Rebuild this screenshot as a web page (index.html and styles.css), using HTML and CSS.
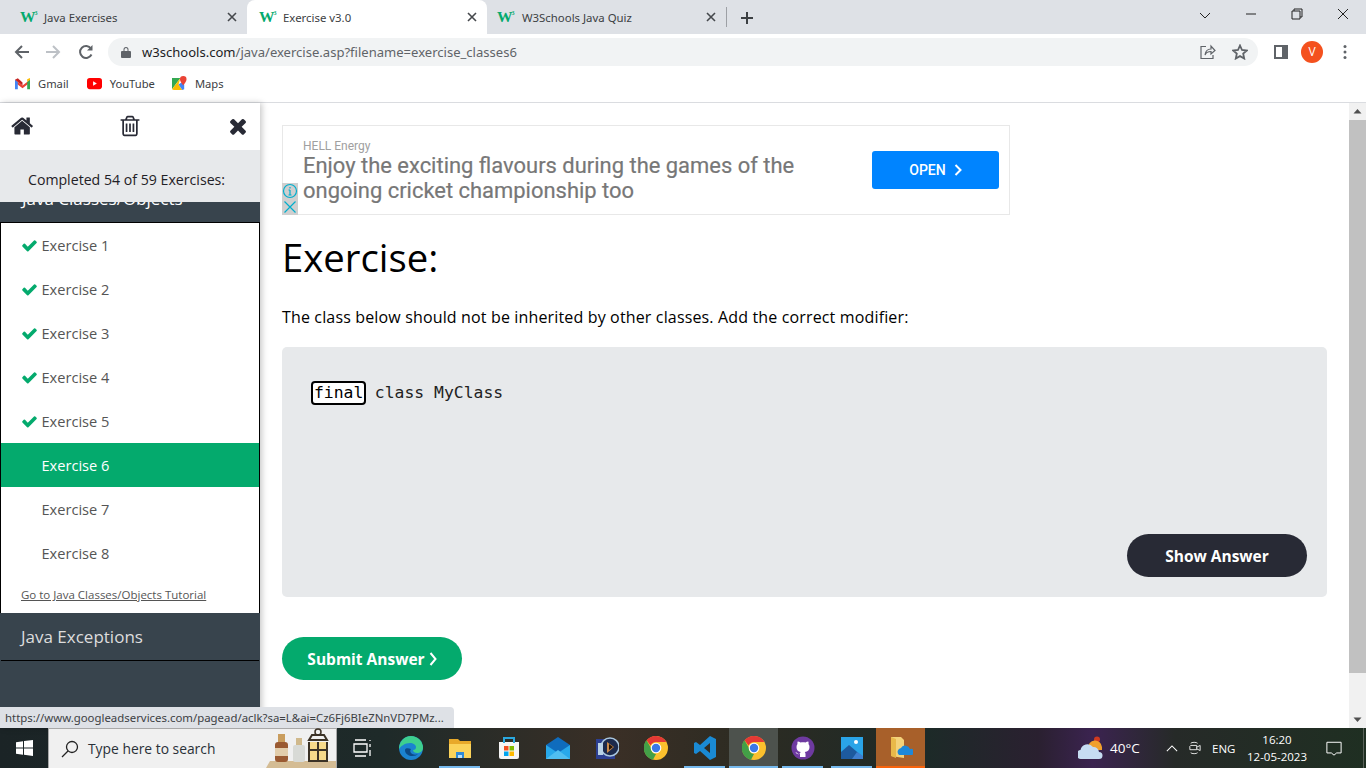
FILE: index.html
```html
<!DOCTYPE html>
<html lang="en">
<head>
<meta charset="utf-8">
<title>Exercise v3.0</title>
<link rel="stylesheet" href="styles.css">
</head>
<body>
<header class="tabstrip">
  <div class="tab tab-first"><span class="fav">W<sup>3</sup></span><span class="tab-title">Java Exercises</span><svg class="tab-x" viewBox="0 0 10 10"><path d="M1 1l8 8M9 1l-8 8"/></svg></div>
  <div class="tab tab-active"><span class="fav">W<sup>3</sup></span><span class="tab-title">Exercise v3.0</span><svg class="tab-x" viewBox="0 0 10 10"><path d="M1 1l8 8M9 1l-8 8"/></svg></div>
  <div class="tab tab-last"><span class="fav">W<sup>3</sup></span><span class="tab-title">W3Schools Java Quiz</span><svg class="tab-x" viewBox="0 0 10 10"><path d="M1 1l8 8M9 1l-8 8"/></svg></div>
  <div class="tab-sep"></div>
  <svg class="tab-plus" viewBox="0 0 12 12"><path d="M6 0v12M0 6h12"/></svg>
  <div class="win-controls">
    <svg class="win-ico" viewBox="0 0 46 34"><path d="M18 13l5 5 5-5" /></svg>
    <svg class="win-ico" viewBox="0 0 46 34"><path d="M18 14h10"/></svg>
    <svg class="win-ico" viewBox="0 0 46 34"><path d="M18 11h8v8h-8zM20 11V9h8v8h-2"/></svg>
    <svg class="win-ico" viewBox="0 0 46 34"><path d="M18 9l10 10M28 9L18 19"/></svg>
  </div>
</header>

<nav class="toolbar">
  <svg class="nav-ico" viewBox="0 0 16 16"><path class="st-dark" d="M15 8H2M8 2L2 8l6 6"/></svg>
  <svg class="nav-ico nav-fwd" viewBox="0 0 16 16"><path class="st-light" d="M1 8h13M8 2l6 6-6 6"/></svg>
  <svg class="nav-ico nav-reload" viewBox="0 0 16 16"><path class="st-dark" d="M13.5 10.5A6 6 0 1 1 13 4.5"/><path class="fill-dark" d="M14.5 1v5.5H9z"/></svg>
  <div class="omnibox">
    <svg class="lock" viewBox="0 0 10 12"><path d="M1 5h8a1 1 0 0 1 1 1v5a1 1 0 0 1-1 1H1a1 1 0 0 1-1-1V6a1 1 0 0 1 1-1zM2.500 5V3.500a2.500 2.500 0 0 1 5 0V5H6.500V3.500a1.500 1.500 0 0 0-3 0V5z"/></svg>
    <span class="url">w3schools.com<span class="url-dim">/java/exercise.asp?filename=exercise_classes6</span></span>
    <svg class="share" viewBox="0 0 16 16"><path d="M6 2.500H1v12h12V11M5 11c.5-4 3-6 6-6V2l4 4.500L11 10V7.500c-3 0-5 1-6 3.500z"/></svg>
    <svg class="star" viewBox="0 0 16 16"><path d="M8 1.500l2 4.500 4.800.5-3.600 3.200 1 4.800L8 12.100l-4.200 2.400 1-4.800L1.200 6.500 6 6z"/></svg>
  </div>
  <svg class="panel" viewBox="0 0 14 14"><path d="M0 0h14v14H0zM2 2v10h6V2z" fill-rule="evenodd"/></svg>
  <div class="avatar">V</div>
  <svg class="dots" viewBox="0 0 4 16"><circle cx="2" cy="2.500" r="1.500"/><circle cx="2" cy="8" r="1.500"/><circle cx="2" cy="13.500" r="1.500"/></svg>
</nav>

<nav class="bookmarks">
  <div class="bm bm-gmail"><svg class="bm-ico" viewBox="0 0 16 12"><path fill="#ea4335" d="M0 2l8 6 8-6v3l-8 6-8-6z"/><path fill="#4285f4" d="M0 2v10h3V4.500z"/><path fill="#34a853" d="M16 2v10h-3V4.500z"/><path fill="#fbbc04" d="M13 1.500L16 0v2l-3 2.500z"/><path fill="#c5221f" d="M0 2l3-1.500 5 4.500v3z"/></svg><span>Gmail</span></div>
  <div class="bm bm-yt"><svg class="bm-ico" viewBox="0 0 16 12"><rect width="16" height="12" rx="3" fill="#f00"/><path d="M6.500 3.500v5l4-2.500z" fill="#fff"/></svg><span>YouTube</span></div>
  <div class="bm"><svg class="bm-ico" viewBox="0 0 16 16"><path fill="#34a853" d="M0 2h9L0 14z"/><path fill="#fbbc04" d="M9 2L0 14l2 1h9l-4-6z"/><path fill="#4285f4" d="M7 9l4 6 2-1V9l-3-2z"/><path fill="#ea4335" d="M12 0a3.500 3.500 0 0 1 3.500 3.500C15.500 6 12 10 12 10S8.500 6 8.500 3.500A3.500 3.500 0 0 1 12 0z"/></svg><span>Maps</span></div>
</nav>

<div class="viewport">
  <aside class="sidebar">
    <div class="side-top">
      <svg class="fa" viewBox="0 0 1792 1792"><path d="M1408 992v480q0 26-19 45t-45 19h-384v-384h-256v384h-384q-26 0-45-19t-19-45v-480q0-1 .5-3t.5-3l575-474 575 474q1 2 1 6zm223-69l-62 74q-8 9-21 11h-3q-13 0-21-7l-692-577-692 577q-12 8-24 7-13-2-21-11l-62-74q-8-10-7-23.5t11-21.5l719-599q32-26 76-26t76 26l244 204v-195q0-14 9-23t23-9h192q14 0 23 9t9 23v408l219 182q10 8 11 21.5t-7 23.5z"/></svg>
      <svg class="fa fa-trash" viewBox="0 0 1792 1792"><path d="M704 736v576q0 14-9 23t-23 9h-64q-14 0-23-9t-9-23v-576q0-14 9-23t23-9h64q14 0 23 9t9 23zm256 0v576q0 14-9 23t-23 9h-64q-14 0-23-9t-9-23v-576q0-14 9-23t23-9h64q14 0 23 9t9 23zm256 0v576q0 14-9 23t-23 9h-64q-14 0-23-9t-9-23v-576q0-14 9-23t23-9h64q14 0 23 9t9 23zm128 724v-948h-896v948q0 22 7 40.5t14.5 27 10.5 8.5h832q3 0 10.5-8.5t14.5-27 7-40.5zm-672-1076h448l-48-117q-7-9-17-11h-317q-10 2-17 11zm928 32v64q0 14-9 23t-23 9h-96v948q0 83-47 143.5t-113 60.5h-832q-66 0-113-58.5t-47-141.5v-952h-96q-14 0-23-9t-9-23v-64q0-14 9-23t23-9h309l70-167q15-37 54-63t79-26h320q40 0 79 26t54 63l70 167h309q14 0 23 9t9 23z"/></svg>
      <svg class="fa" viewBox="0 0 1792 1792"><path d="M1490 1322q0 40-28 68l-136 136q-28 28-68 28t-68-28l-294-294-294 294q-28 28-68 28t-68-28l-136-136q-28-28-28-68t28-68l294-294-294-294q-28-28-28-68t28-68l136-136q28-28 68-28t68 28l294 294 294-294q28-28 68-28t68 28l136 136q28 28 28 68t-28 68l-294 294 294 294q28 28 28 68z"/></svg>
    </div>
    <div class="side-progress">Completed 54 of 59 Exercises:</div>
    <div class="side-scroll">
      <div class="side-heading">Java Classes/Objects</div>
      <div class="side-list">
        <div class="ex"><svg class="check" viewBox="0 0 1792 1792"><path d="M1671 566q0 40-28 68l-724 724-136 136q-28 28-68 28t-68-28l-136-136-362-362q-28-28-28-68t28-68l136-136q28-28 68-28t68 28l294 295 656-657q28-28 68-28t68 28l136 136q28 28 28 68z"/></svg>Exercise 1</div>
        <div class="ex"><svg class="check" viewBox="0 0 1792 1792"><path d="M1671 566q0 40-28 68l-724 724-136 136q-28 28-68 28t-68-28l-136-136-362-362q-28-28-28-68t28-68l136-136q28-28 68-28t68 28l294 295 656-657q28-28 68-28t68 28l136 136q28 28 28 68z"/></svg>Exercise 2</div>
        <div class="ex"><svg class="check" viewBox="0 0 1792 1792"><path d="M1671 566q0 40-28 68l-724 724-136 136q-28 28-68 28t-68-28l-136-136-362-362q-28-28-28-68t28-68l136-136q28-28 68-28t68 28l294 295 656-657q28-28 68-28t68 28l136 136q28 28 28 68z"/></svg>Exercise 3</div>
        <div class="ex"><svg class="check" viewBox="0 0 1792 1792"><path d="M1671 566q0 40-28 68l-724 724-136 136q-28 28-68 28t-68-28l-136-136-362-362q-28-28-28-68t28-68l136-136q28-28 68-28t68 28l294 295 656-657q28-28 68-28t68 28l136 136q28 28 28 68z"/></svg>Exercise 4</div>
        <div class="ex"><svg class="check" viewBox="0 0 1792 1792"><path d="M1671 566q0 40-28 68l-724 724-136 136q-28 28-68 28t-68-28l-136-136-362-362q-28-28-28-68t28-68l136-136q28-28 68-28t68 28l294 295 656-657q28-28 68-28t68 28l136 136q28 28 28 68z"/></svg>Exercise 5</div>
        <div class="ex ex-current">Exercise 6</div>
        <div class="ex ex-open">Exercise 7</div>
        <div class="ex ex-open">Exercise 8</div>
        <div class="side-link">Go to Java Classes/Objects Tutorial</div>
      </div>
      <div class="side-next">Java Exceptions</div>
    </div>
  </aside>

  <main class="content">
    <div class="ad">
      <div class="ad-text">
        <div class="ad-brand">HELL Energy</div>
        <div class="ad-head">Enjoy the exciting flavours during the games of the ongoing cricket championship too</div>
      </div>
      <div class="ad-open">OPEN<svg class="ad-chev" viewBox="0 0 8 12"><path d="M1.500 1l5 5-5 5"/></svg></div>
      <div class="ad-badges">
        <svg class="ad-badge" viewBox="0 0 16 16"><circle cx="8" cy="8" r="6.500"/><path d="M8 7v5M6.500 12h3M6.500 7H8M8 4v1.500"/></svg>
        <svg class="ad-badge" viewBox="0 0 16 16"><path d="M2.500 2.500l11 11M13.500 2.500l-11 11"/></svg>
      </div>
    </div>
    <h1 class="title">Exercise:</h1>
    <p class="prompt">The class below should not be inherited by other classes. Add the correct modifier:</p>
    <section class="code-box">
      <div class="code-line"><span class="code-input">final</span> class MyClass</div>
      <div class="show-row"><span class="btn btn-dark">Show Answer</span></div>
    </section>
    <div class="btn btn-green">Submit Answer<svg class="btn-chev" viewBox="0 0 8 14"><path d="M1.500 1l5 6-5 6"/></svg></div>
  </main>

  <div class="scrollbar">
    <svg class="sb-arrow" viewBox="0 0 17 17"><path d="M4.500 10.500h8l-4-4.500z"/></svg>
    <div class="sb-thumb"></div>
    <div class="sb-rest"></div>
    <svg class="sb-arrow" viewBox="0 0 17 17"><path d="M4.500 6.500h8l-4 4.500z"/></svg>
  </div>

  <div class="status-bubble">https://www.googleadservices.com/pagead/aclk?sa=L&amp;ai=Cz6Fj6BIeZNnVD7PMz...</div>
</div>

<footer class="taskbar">
  <div class="start"><svg class="winlogo" viewBox="0 0 17 16"><path d="M0 2.300l7-1v6.300H0zM8 1.100l9-1.100v7.600H8zM0 8.500h7v6.300l-7-1zM8 8.500h9V16l-9-1.200z"/></svg></div>
  <div class="search">
    <svg class="search-ico" viewBox="0 0 18 18"><circle cx="11" cy="7" r="5.500"/><path d="M7 11l-6 6"/></svg>
    <span class="search-text">Type here to search</span>
    <svg class="search-art" viewBox="0 0 70 40"><path d="M0 40l4-7h66v7z" fill="#d4bc94"/><rect x="9" y="14" width="13" height="20" rx="3" fill="#9a5a32"/><rect x="12" y="6" width="7" height="8" fill="#c99d5e"/><rect x="9" y="20" width="13" height="8" fill="#e2cdab"/><rect x="27" y="17" width="12" height="17" rx="2" fill="#d8dad6"/><rect x="30" y="10" width="6" height="7" fill="#d0b98c"/><path d="M43 14h18v18H43z" fill="#f6d98a"/><path d="M43 12h18l-3-5H46zM43 14v19h18V14M52 14v19M43 22h18" fill="none" stroke="#3b3226" stroke-width="2"/><circle cx="52" cy="4" r="3" fill="none" stroke="#3b3226" stroke-width="1.500"/></svg>
  </div>
  <div class="tb-apps">
    <div class="tb-app"><svg class="tb-ico" viewBox="0 0 24 24"><path d="M5 4h11M5 20h11M4 8h13v8H4zM20 4v1M20 8v3M20 14v6" fill="none" stroke="#fff" stroke-width="1.300"/></svg></div>
    <div class="tb-app"><svg class="tb-ico" viewBox="0 0 24 24"><circle cx="12" cy="12" r="12" fill="#1b83d0"/><path d="M12 0a12 12 0 0 1 12 12c0 3-3 5-6 5-2 0-4-1-4-3 2 0 3-1 3-3 0-2-3-4-6-4C6 7 2 10 0 13 0 6 5 0 12 0z" fill="#3ecf8e"/><path d="M6 14c0 4 4 6 7 6 3 0 5-1 6-2-2 1-5 1-7-1-1-1-1-3 0-4-3-1-6-1-6 1z" fill="#0c4a86"/></svg></div>
    <div class="tb-app tb-on"><svg class="tb-ico" viewBox="0 0 24 24"><path d="M1 3h9l2 2h11v4H1z" fill="#e8a92a"/><path d="M1 8h22v14H1z" fill="#fbd35a"/><path d="M8 16h8v6H8z" fill="#2f8ad6"/><path d="M10 19h4v3h-4z" fill="#bde0f7"/></svg></div>
    <div class="tb-app"><svg class="tb-ico" viewBox="0 0 24 24"><path d="M2 6h20v15a2 2 0 0 1-2 2H4a2 2 0 0 1-2-2z" fill="#f5f5f5"/><path d="M7 7V2h10v5" fill="none" stroke="#2aa8e0" stroke-width="2"/><path d="M7 10h4.500v4.500H7z" fill="#f25022"/><path d="M12.500 10H17v4.500h-4.500z" fill="#7fba00"/><path d="M7 15.500h4.500V20H7z" fill="#00a4ef"/><path d="M12.500 15.500H17V20h-4.500z" fill="#ffb900"/></svg></div>
    <div class="tb-app"><svg class="tb-ico" viewBox="0 0 24 24"><path d="M0 9L12 1l12 8v14H0z" fill="#0f6cbd"/><path d="M0 9l12 8 12-8v14H0z" fill="#28a8ea"/><path d="M0 23l12-9 12 9z" fill="#50bef0"/></svg></div>
    <div class="tb-app"><svg class="tb-ico" viewBox="0 0 24 24"><path d="M1 3h19v20H1z" fill="#2c3f91"/><circle cx="15" cy="11" r="9" fill="#1c2a4c" stroke="#a9c6de" stroke-width="1.500"/><path d="M12 6l7 5-7 6z" fill="#c98a4b"/><path d="M14 8l4 3-4 3z" fill="#231407"/><path d="M3 7h5v12H3z" fill="#b9d2e6"/></svg></div>
    <div class="tb-app"><svg class="tb-ico" viewBox="0 0 24 24"><circle cx="12" cy="12" r="12" fill="#fbc02d"/><path d="M12 0a12 12 0 0 1 10.400 6H12a6 6 0 0 0-5.500 3.500L2.500 4.300A12 12 0 0 1 12 0z" fill="#e53935"/><path d="M2.500 4.300L7 12a6 6 0 0 0 5 6l-3 5.700A12 12 0 0 1 2.500 4.300z" fill="#43a047"/><circle cx="12" cy="12" r="5.300" fill="#fff"/><circle cx="12" cy="12" r="4.200" fill="#3b78e7"/></svg></div>
    <div class="tb-app tb-on"><svg class="tb-ico" viewBox="0 0 24 24"><path d="M17 0l6 3v18l-6 3-10-9-4 3-2-1V7l2-1 4 3zM17 7l-6 5 6 5z" fill="#1a8ad4" fill-rule="evenodd"/></svg></div>
    <div class="tb-app tb-on tb-active"><svg class="tb-ico" viewBox="0 0 24 24"><circle cx="12" cy="12" r="12" fill="#fbc02d"/><path d="M12 0a12 12 0 0 1 10.400 6H12a6 6 0 0 0-5.500 3.500L2.500 4.300A12 12 0 0 1 12 0z" fill="#e53935"/><path d="M2.500 4.300L7 12a6 6 0 0 0 5 6l-3 5.700A12 12 0 0 1 2.500 4.300z" fill="#43a047"/><circle cx="12" cy="12" r="5.300" fill="#fff"/><circle cx="12" cy="12" r="4.200" fill="#3b78e7"/></svg></div>
    <div class="tb-app tb-on"><svg class="tb-ico" viewBox="0 0 24 24"><circle cx="12" cy="12" r="11.500" fill="#6e3aa0"/><path d="M9 21v-3c-3 .6-4-1-4.500-2 1 .3 1.500 1 2 1.500.7.6 1.700.4 2.500 0 0-.7.300-1.200.7-1.600C7 15.500 5.500 14 5.500 11c0-1.200.4-2.200 1-3-.2-.7-.2-1.800.2-2.500 1 0 2 .5 2.800 1 1.600-.4 3.400-.4 5 0 .8-.5 1.800-1 2.800-1 .4.700.4 1.800.2 2.500.6.800 1 1.800 1 3 0 3-1.500 4.500-4.700 4.900.5.500.7 1.200.7 2V21z" fill="#fff"/></svg></div>
    <div class="tb-app tb-on"><svg class="tb-ico" viewBox="0 0 24 24"><path d="M1 1h22v22H1z" fill="#2aa4e8"/><path d="M1 23v-7l8-7 14 12v2z" fill="#1d5a9e"/><path d="M12 23l5-7 6 4v3z" fill="#3f7fd0"/><circle cx="16" cy="6" r="2" fill="#fff"/></svg></div>
    <div class="tb-app tb-folder"><svg class="tb-ico" viewBox="0 0 24 24"><path d="M2 1h10l3 3v18l-13-2z" fill="#f4d27a"/><path d="M2 1l5 2v19l-5-2z" fill="#e9b949"/><path d="M10 19a4 4 0 0 1 2-7 5 5 0 0 1 9 1 3 3 0 0 1 2 6z" fill="#1e88d8"/></svg></div>
  </div>
  <div class="tray">
    <svg class="weather" viewBox="0 0 26 24"><circle cx="19" cy="3.500" r="3" fill="#d03a20"/><path d="M10 12a7 7 0 0 1 14-1v3H10z" fill="#f0a02c"/><path d="M3 23a4.500 4.500 0 0 1-.5-9A7 7 0 0 1 15 11a5.500 5.500 0 0 1 6 5 3.500 3.500 0 0 1 0 7z" fill="#c6dcf2"/></svg>
    <span class="temp">40°C</span>
    <svg class="tray-chev" viewBox="0 0 14 8"><path d="M1 7l6-6 6 6"/></svg>
    <svg class="tray-meet" viewBox="0 0 14 16"><path d="M2 2.500C3 1 9 1 10 2.500M2 13.500c1 1.500 7 1.500 8 0M1 6v4h8V5H2zM9 7l4-2v6l-4-2"/></svg>
    <span class="lang">ENG</span>
    <div class="clock"><span>16:20</span><span>12-05-2023</span></div>
    <svg class="notif" viewBox="0 0 18 16"><path d="M1 1h16v12h-5l-3 2.500L6 13H1z"/></svg>
    <div class="show-desktop"></div>
  </div>
</footer>
</body>
</html>
```

FILE: styles.css
```css
* { box-sizing: border-box; }
html, body { margin: 0; height: 100%; }
body {
  width: 1366px; height: 768px; overflow: hidden;
  display: flex; flex-direction: column;
  font-family: "Open Sans", "Noto Sans", sans-serif;
  background: #fff; color: #000;
}

/* Tab strip */
.tabstrip { height: 34px; flex: none; background: #dee1e6; display: flex; align-items: flex-end; padding-left: 8px; }
.tab { width: 240px; height: 34px; display: flex; align-items: center; padding: 0 10px 0 12px; color: #3c4043; font-size: 11.400px; font-family: "Noto Sans", sans-serif; }
.tab-first { width: 239px; }
.tab-active { background: #fff; border-radius: 8px 8px 0 0; color: #3c4043; }
.tab-last { width: 239px; padding-left: 10px; }
.tab-last .fav { width: 25px; }
.fav { width: 24px; flex: none; font: bold 15.500px/1 "Liberation Serif", serif; color: #04aa6d; white-space: nowrap; }
.fav sup { font-size: 6px; vertical-align: 7px; line-height: 0; margin-left: -1px; }
.tab-title { flex: 1; white-space: nowrap; }
.tab-x { width: 10px; height: 10px; fill: none; stroke: #45484c; stroke-width: 1.600; }
.tab-sep { width: 1px; height: 20px; background: #9da0a5; margin-bottom: 7px; }
.tab-plus { width: 12px; height: 12px; margin: 0 0 10px 14px; stroke: #3c4043; stroke-width: 2; fill: none; }
.win-controls { margin-left: auto; display: flex; align-self: flex-start; }
.win-ico { width: 46px; height: 34px; fill: none; stroke: #222; stroke-width: 1; }

/* Toolbar */
.toolbar { height: 34px; flex: none; display: flex; align-items: center; padding: 2px 13px 0 14px; background: #fff; }
.nav-ico { width: 16px; height: 16px; margin-right: 15px; flex: none; fill: none; }
.nav-fwd { margin-right: 17px; }
.nav-reload { margin-right: 14px; }
.st-dark { stroke: #5f6368; stroke-width: 2; fill: none; }
.st-light { stroke: #bdc1c6; stroke-width: 2; fill: none; }
.fill-dark { fill: #5f6368; }
.omnibox { width: 1150px; height: 28px; flex: none; background: #f1f3f4; border-radius: 14px; display: flex; align-items: center; padding: 0 10px 0 13px; }
.lock { width: 10px; height: 12px; fill: #5f6368; margin-right: 11px; }
.url { flex: 1; font: 13.060px "Noto Sans", sans-serif; color: #202124; white-space: nowrap; }
.url-dim { color: #5f6368; }
.share { width: 16px; height: 16px; margin-right: 16px; fill: none; stroke: #5f6368; stroke-width: 1.200; }
.star { width: 16px; height: 16px; fill: none; stroke: #5f6368; stroke-width: 1.800; }
.panel { width: 14px; height: 14px; margin-left: 16px; fill: #5f6368; flex: none; }
.avatar { width: 22px; height: 22px; margin-left: 13px; border-radius: 50%; background: #f4511e; color: #fff; font-size: 12px; line-height: 22px; text-align: center; flex: none; }
.dots { width: 4px; height: 16px; margin-left: 20px; fill: #5f6368; flex: none; }

/* Bookmarks */
.bookmarks { height: 35px; flex: none; border-bottom: 1px solid #dadce0; display: flex; align-items: center; padding: 0 0 4px 15px; font: 11.200px "Noto Sans", sans-serif; color: #3c4043; }
.bm { display: flex; align-items: center; }
.bm-ico { width: 15px; height: 15px; margin-right: 8px; flex: none; }
.bm-gmail { margin-right: 18px; }
.bm-yt { margin-right: 17px; }

/* Page viewport */
.viewport { position: relative; flex: 1; min-height: 0; display: flex; }

/* Sidebar */
.sidebar { width: 260px; flex: none; display: flex; flex-direction: column; box-shadow: 2px 0 6px rgba(0,0,0,.22); position: relative; }
.side-top { height: 47px; background: #fff; display: flex; align-items: center; justify-content: space-between; padding: 0 10px 2px 11px; }
.fa { width: 24px; height: 24px; fill: #282a35; }
.fa-trash { margin-right: 2px; }
.side-progress { height: 52px; background: #e7e9eb; font-size: 14.150px; line-height: 20px; padding: 20px 7px 0 0; text-align: center; color: #1f2126; }
.side-scroll { flex: 1; background: #38444d; overflow: hidden; }
.side-heading { height: 20px; margin-top: -15px; padding-left: 22px; color: #fff; font-size: 17px; line-height: 24px; white-space: nowrap; }
.side-list { margin-top: 15px; background: #fff; border: 1px solid #000; border-width: 1px 1px 0 1px; height: 391px; }
.ex { height: 44px; display: flex; align-items: center; padding-left: 40.500px; position: relative; font-size: 14.600px; color: #555; }
.check { position: absolute; left: 19.500px; top: 14px; width: 17px; height: 17px; fill: #04aa6d; }
.ex-current { background: #04aa6d; color: #fff; }
.side-link { padding: 12px 0 0 20px; font-size: 11.500px; line-height: 16px; color: #555; text-decoration: underline; }
.side-next { height: 48px; padding-left: 20px; font-size: 17px; line-height: 47px; color: #ddd; border-bottom: 1px solid #000; margin: 0 1px; }

/* Main */
.content { flex: 1; min-width: 0; padding: 22px 22px 0; background: #fff; }
.ad { position: relative; width: 728px; height: 90px; border: 1px solid #e8e8e8; display: flex; align-items: center; padding-left: 20px; }
.ad-text { width: 540px; margin-right: 29px; color: #6f6f6f; padding-top: 2px; }
.ad-brand { font: 12px/14px Roboto, sans-serif; color: #a0a0a0; }
.ad-head { font: 400 21.950px/25px Roboto, sans-serif; color: #777; -webkit-text-stroke: .2px #777; }
.ad-open { width: 127px; height: 38px; background: #0084ff; border-radius: 3px; color: #fff; display: flex; align-items: center; justify-content: center; gap: 8px; font: 500 14px Roboto, sans-serif; }
.ad-chev { width: 8px; height: 12px; fill: none; stroke: #fff; stroke-width: 2; }
.ad-badges { position: absolute; left: -1px; bottom: -1px; display: flex; flex-direction: column; }
.ad-badge { width: 16px; height: 16px; background: #cfcfcf; fill: none; stroke: #00aecd; stroke-width: 1.200; display: block; }
.title { margin: 14px 0 0; font-size: 38.300px; line-height: 56px; font-weight: 400; color: #000; }
.prompt { margin: 20px 0 0; font-size: 16px; letter-spacing: .15px; line-height: 24px; color: #000; white-space: nowrap; }
.code-box { margin-top: 18px; height: 250px; background: #e7e9eb; border-radius: 5px; padding: 34px 20px 20px 29px; display: flex; flex-direction: column; justify-content: space-between; }
.code-line { font: 16.400px/24px "DejaVu Sans Mono", monospace; color: #222; }
.code-input { display: inline-block; width: 55px; height: 24px; margin-right: -1px; border: 2px solid #000; border-radius: 4px; background: #fff; padding-left: 1px; line-height: 20px; color: #000; vertical-align: top; }
.show-row { display: flex; justify-content: flex-end; }
.btn { display: flex; align-items: center; justify-content: center; height: 43px; width: 180px; border-radius: 25px; color: #fff; font-size: 15.500px; font-weight: 700; }
.btn-dark { background: #282a35; }
.btn-green { background: #04aa6d; margin-top: 40px; gap: 4px; }
.btn-chev { width: 8px; height: 14px; fill: none; stroke: #fff; stroke-width: 2; }

/* Scrollbar */
.scrollbar { width: 17px; flex: none; background: #f1f1f1; display: flex; flex-direction: column; }
.sb-arrow { width: 17px; height: 17px; fill: #505050; flex: none; }
.sb-thumb { height: 553px; background: #c1c1c1; flex: none; }
.sb-rest { flex: 1; }

.status-bubble { position: absolute; left: 0; bottom: 0; height: 21px; width: 454px; padding-left: 5px; background: #dee1e6; border-radius: 0 4px 0 0; font: 11.400px/21px "Noto Sans", sans-serif; color: #3c4043; white-space: nowrap; }

/* Taskbar */
.taskbar { height: 40px; flex: none; display: flex; background: linear-gradient(90deg, #1b2426 0%, #1e2a29 28%, #3a2f26 45%, #2c2b22 55%, #1d2a28 68%, #2a2030 76%, #3b2350 80%, #262a28 86%, #1f2f22 100%); color: #fff; }
.start { width: 48px; flex: none; display: flex; align-items: center; justify-content: center; }
.winlogo { width: 17px; height: 16px; fill: #fff; }
.search { width: 289px; flex: none; position: relative; background: #f0f0f0; border: 1px solid #a8a8a8; border-width: 1px 1px 0; display: flex; align-items: center; padding-left: 12px; color: #222; }
.search-ico { width: 18px; height: 18px; fill: none; stroke: #222; stroke-width: 1.300; margin-right: 9px; flex: none; }
.search-text { font-size: 13.850px; color: #2a3138; white-space: nowrap; }
.search-art { position: absolute; right: 0; bottom: 0; width: 70px; height: 40px; }
.tb-apps { display: flex; flex: none; }
.tb-app { width: 49px; height: 40px; flex: none; display: flex; align-items: center; justify-content: center; position: relative; }
.tb-ico { width: 24px; height: 24px; }
.tb-on::after { content: ""; position: absolute; left: 4px; right: 4px; bottom: 0; height: 2px; background: #76b9ed; }
.tb-active { background: #4d524d; }
.tb-active::after { left: 0; right: 0; }
.tb-folder { background: #a8602a; }
.tb-folder::after { content: ""; position: absolute; left: 0; right: 0; bottom: 0; height: 2px; background: #f7630c; }
.tray { flex: 1; min-width: 0; display: flex; align-items: center; padding-left: 153px; font-size: 12px; }
.weather { width: 26px; height: 24px; flex: none; }
.temp { margin-left: 6px; font-size: 13.500px; width: 37px; flex: none; }
.tray-chev { width: 12px; height: 7px; margin-left: 19px; fill: none; stroke: #fff; stroke-width: 1.200; flex: none; }
.tray-meet { width: 12px; height: 14px; margin-left: 11px; fill: none; stroke: #fff; stroke-width: 1; flex: none; }
.lang { margin-left: 11px; width: 24px; flex: none; font-size: 11.500px; }
.clock { width: 60px; flex: none; margin-left: 11px; display: flex; flex-direction: column; align-items: center; line-height: 17px; font-size: 11.500px; white-space: nowrap; }
.notif { width: 16px; height: 15px; margin-left: 19px; fill: none; stroke: #fff; stroke-width: 1.100; flex: none; }
.show-desktop { width: 1px; height: 40px; margin-left: 21px; background: #5a625a; flex: none; }
```
